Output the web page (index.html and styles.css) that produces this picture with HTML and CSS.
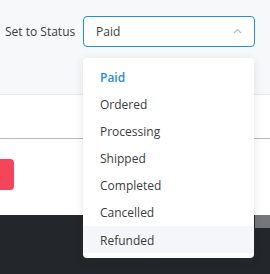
FILE: index.html
```html
<!DOCTYPE html>
<html lang="en">
<head>
    <meta charset="UTF-8">
    <meta name="viewport" content="width=device-width, initial-scale=1.0">
    <title>Set to Status</title>
    <link rel="stylesheet" href="styles.css">
</head>
<body>
    <!-- top bar with the status select -->
    <div class="toolbar">
        <span class="label">Set to Status</span>
        <div class="select">
            <span class="value">Paid</span>
            <svg class="chevron" width="9" height="6" viewBox="0 0 9 6">
                <path d="M1 5 L4.5 1.5 L8 5" fill="none" stroke="#b5b9bf" stroke-width="1.2"/>
            </svg>
            <ul class="menu">
                <li class="item active">Paid</li>
                <li class="item">Ordered</li>
                <li class="item">Processing</li>
                <li class="item">Shipped</li>
                <li class="item">Completed</li>
                <li class="item">Cancelled</li>
                <li class="item hover">Refunded</li>
            </ul>
        </div>
    </div>

    <!-- page body under the bar -->
    <div class="content">
        <div class="row"></div>
        <div class="actions">
            <div class="btn-danger"></div>
        </div>
    </div>

    <div class="footer">
        <div class="scroll"></div>
    </div>
</body>
</html>
```

FILE: styles.css
```css
body{
    margin: 0;
    font-family: "Open Sans", "Liberation Sans", sans-serif;
    font-size: 12px;
    color: #3a3d42;
    background-color: #f7f8fa;
}
.toolbar{
    height: 95px;
    border-bottom: 1px solid #e6e8eb;
    background-color: #f7f8fa;
    display: flex;
    align-items: flex-start;
    padding-top: 16px;
    box-sizing: border-box;
}
.label{
    width: 83px;
    padding-left: 5px;
    box-sizing: border-box;
    line-height: 31px;
}
.select{
    width: 172px;
    height: 31px;
    box-sizing: border-box;
    border: 1px solid #2a8bd6;
    border-radius: 4px;
    background-color: #fff;
    display: flex;
    align-items: center;
    justify-content: space-between;
    padding: 0 12px 0 12px;
    position: relative;
}
.chevron{
    margin-top: -1px;
}
/* dropdown list lies over the page */
.menu{
    position: absolute;
    top: 41px;
    left: -1px;
    width: 171px;
    margin: 0;
    padding: 6px 0 5px;
    list-style: none;
    background-color: #fff;
    border-radius: 4px;
    box-shadow: 0 2px 10px rgba(30, 40, 60, 0.12);
    z-index: 2;
}
.item{
    height: 27px;
    line-height: 27px;
    padding-left: 17px;
}
.item:last-child{
    height: 27px;
    line-height: 29px;
}
.item.active{
    color: #2a8bd6;
    font-weight: 600;
}
.item.hover{
    background-color: #f4f6f9;
}
.content{
    background-color: #fff;
    height: 120px;
}
.row{
    height: 43px;
    border-bottom: 1px solid #b5b7ba;
}
.actions{
    padding-top: 20px;
}
.btn-danger{
    width: 14px;
    height: 31px;
    background-color: #f5455b;
    border-radius: 0 4px 4px 0;
}
.footer{
    height: 59px;
    background-color: #23272b;
    display: flex;
    justify-content: flex-end;
}
.scroll{
    width: 15px;
    height: 13px;
    background-color: #75777a;
}
```
